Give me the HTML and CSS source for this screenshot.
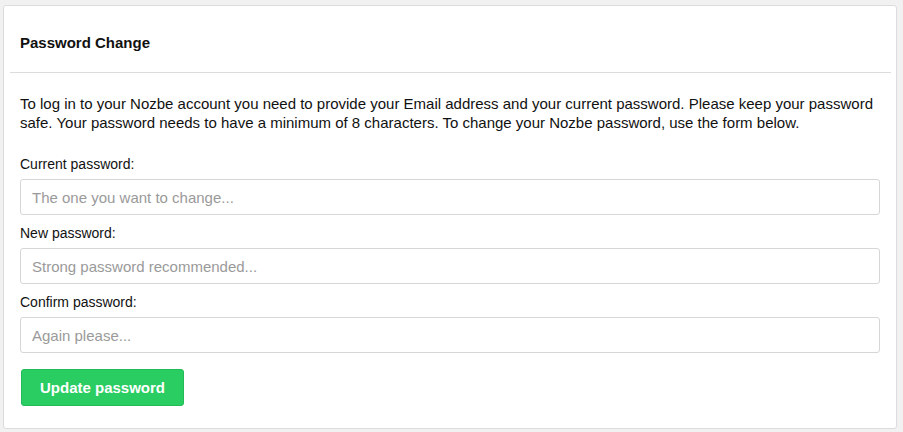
FILE: index.html
```html
<!DOCTYPE html>
<html lang="en">
<head>
<meta charset="utf-8">
<title>Password Change</title>
<link rel="stylesheet" href="styles.css">
</head>
<body>
<div class="card">
  <div class="card-header">
    <h2 class="card-title">Password Change</h2>
  </div>
  <hr class="divider">
  <div class="card-body">
    <p class="intro">To log in to your Nozbe account you need to provide your Email address and your current password. Please keep your password safe. Your password needs to have a minimum of 8 characters. To change your Nozbe password, use the form below.</p>
    <form class="form">
      <label class="label" for="cur">Current password:</label>
      <input class="input" id="cur" type="password" placeholder="The one you want to change...">
      <label class="label" for="new">New password:</label>
      <input class="input" id="new" type="password" placeholder="Strong password recommended...">
      <label class="label" for="conf">Confirm password:</label>
      <input class="input" id="conf" type="password" placeholder="Again please...">
      <button class="btn" type="button">Update password</button>
    </form>
  </div>
</div>
</body>
</html>
```
FILE: styles.css
```css
html, body {
  margin: 0;
  padding: 0;
}
body {
  background: #f1f1f1;
  font-family: "Liberation Sans", Arial, Helvetica, sans-serif;
  color: #111;
  width: 903px;
  height: 432px;
  overflow: hidden;
}
.card {
  margin: 5px 6px 0 3px;
  background: #fff;
  border: 1px solid #dcdcdc;
  border-radius: 3px;
  padding-bottom: 22px;
}
.card-header {
  padding: 28px 16px 20px;
}
.card-title {
  margin: 0;
  font-size: 15px;
  line-height: 18px;
  font-weight: bold;
  color: #111;
}
.divider {
  margin: 0 5px 0 6px;
  border: 0;
  border-top: 1px solid #dcdcdc;
  height: 0;
}
.card-body {
  padding: 0 16px;
}
.intro {
  margin: 21px 0 23px;
  font-size: 15px;
  line-height: 19px;
}
.form {
  display: flex;
  flex-direction: column;
  align-items: flex-start;
}
.label {
  font-size: 14px;
  line-height: 19px;
  margin-bottom: 5px;
}
.input {
  box-sizing: border-box;
  width: 100%;
  height: 36px;
  margin: 0 0 9px;
  padding: 0 11px;
  border: 1px solid #d6d6d6;
  border-radius: 3px;
  font-family: "Liberation Sans", Arial, Helvetica, sans-serif;
  font-size: 15px;
  color: #333;
  background: #fff;
  outline: none;
}
.input::placeholder {
  color: #9a9a9a;
}
.btn {
  margin-top: 7px;
  margin-left: 1px;
  box-sizing: border-box;
  height: 37px;
  padding: 0 18px;
  background: #29cd62;
  border: 1px solid #22bb57;
  border-radius: 3px;
  color: #fff;
  font-family: "Liberation Sans", Arial, Helvetica, sans-serif;
  font-size: 15px;
  font-weight: bold;
  line-height: 17px;
  cursor: pointer;
}
```
